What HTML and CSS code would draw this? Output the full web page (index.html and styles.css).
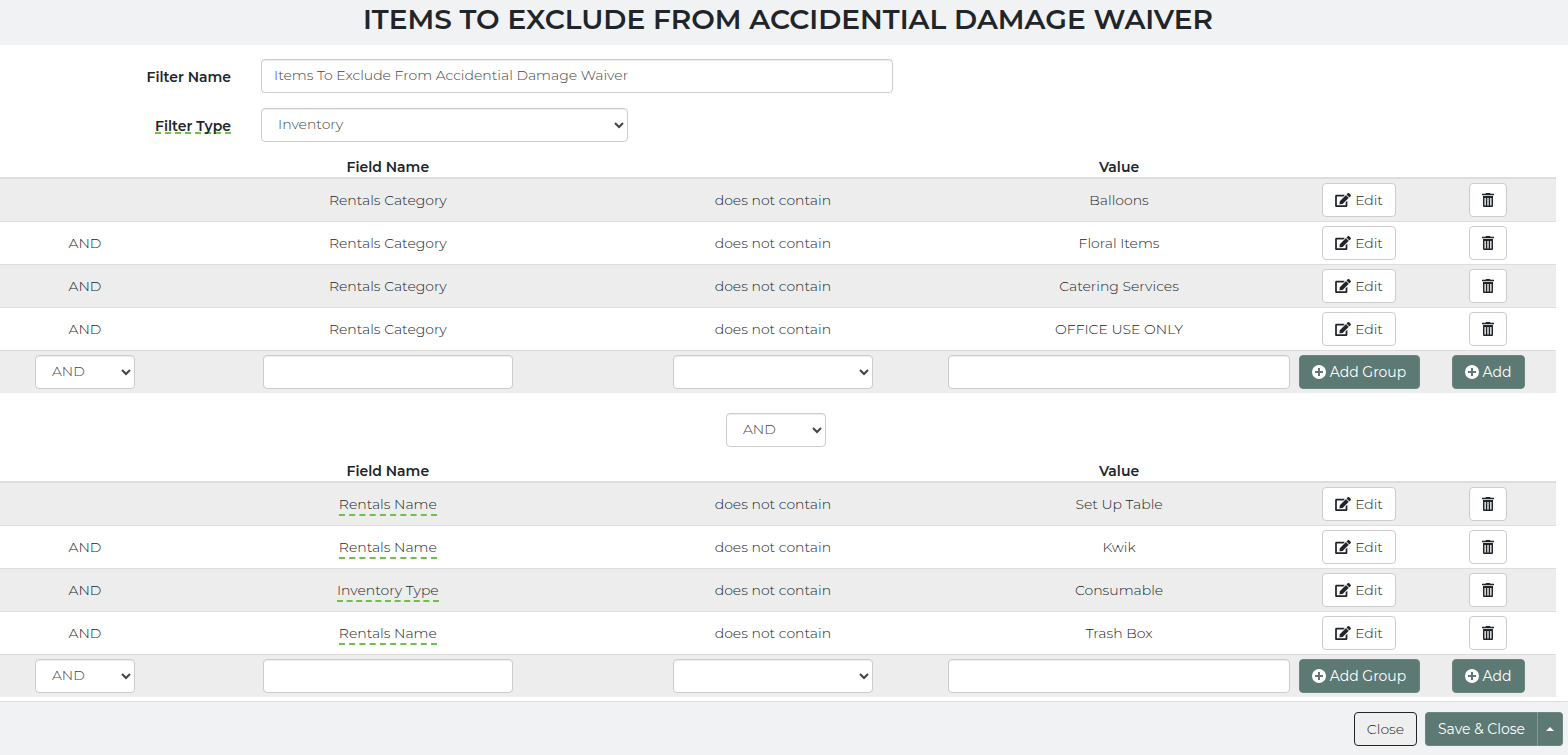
FILE: index.html
```html
<!DOCTYPE html>
<html lang="en">
<head>
<meta charset="utf-8">
<title>Items To Exclude From Accidential Damage Waiver</title>
<link rel="stylesheet" href="styles.css">
</head>
<body>
<svg class="sprite" aria-hidden="true">
  <symbol id="i-edit" viewBox="0 0 576 512"><path d="M402.6 83.2l90.2 90.2c3.8 3.8 3.8 10 0 13.8L274.4 405.6l-92.8 10.3c-12.4 1.4-22.9-9.1-21.5-21.5l10.3-92.8L388.8 83.2c3.8-3.8 10-3.8 13.8 0zm162-22.9l-48.8-48.8c-15.2-15.2-39.9-15.2-55.2 0l-35.4 35.4c-3.8 3.8-3.8 10 0 13.8l90.2 90.2c3.8 3.8 10 3.8 13.8 0l35.4-35.4c15.2-15.3 15.2-40 0-55.2zM384 346.2V448H64V128h229.8c3.2 0 6.2-1.3 8.5-3.5l40-40c7.6-7.6 2.2-20.5-8.5-20.5H48C21.5 64 0 85.5 0 112v352c0 26.5 21.5 48 48 48h352c26.5 0 48-21.5 48-48V306.2c0-10.7-12.9-16-20.5-8.5l-40 40c-2.2 2.3-3.5 5.3-3.5 8.5z"/></symbol>
  <symbol id="i-trash" viewBox="0 0 12 14"><path fill-rule="evenodd" d="M4 0h4l.5 .8H12v1.500H0V.8h3.500zM1 3h10v10a1 1 0 0 1-1 1H2a1 1 0 0 1-1-1zM2.500 5v7.500h1.300V5zM5.350 5v7.500h1.300V5zM8.200 5v7.500h1.300V5z"/></symbol>
  <symbol id="i-plus" viewBox="0 0 14 14"><path fill-rule="evenodd" d="M7 0a7 7 0 1 1 0 14A7 7 0 0 1 7 0zM6 3v3H3v2h3v3h2V8h3V6H8V3z"/></symbol>
</svg>

<header class="title-bar"><h1>ITEMS TO EXCLUDE FROM ACCIDENTIAL DAMAGE WAIVER</h1></header>

<main>
  <form class="filter-form">
    <div class="form-row">
      <label for="name">Filter Name</label>
      <input class="control" id="name" type="text" value="Items To Exclude From Accidential Damage Waiver">
    </div>
    <div class="form-row form-row-short">
      <label for="type"><span class="label-hint">Filter Type</span></label>
      <select class="control" id="type"><option>Inventory</option></select>
    </div>
  </form>

  <table class="rules">
    <colgroup><col class="c-join"><col class="c-field"><col><col class="c-value"><col class="c-edit"><col class="c-remove"></colgroup>
    <thead><tr><th></th><th>Field Name</th><th></th><th>Value</th><th></th><th></th></tr></thead>
    <tbody>
      <tr><td></td><td>Rentals Category</td><td>does not contain</td><td>Balloons</td><td><button class="btn"><svg class="i-edit"><use href="#i-edit"/></svg>Edit</button></td><td><button class="btn" aria-label="Delete"><svg class="i-trash"><use href="#i-trash"/></svg></button></td></tr>
      <tr><td>AND</td><td>Rentals Category</td><td>does not contain</td><td>Floral Items</td><td><button class="btn"><svg class="i-edit"><use href="#i-edit"/></svg>Edit</button></td><td><button class="btn" aria-label="Delete"><svg class="i-trash"><use href="#i-trash"/></svg></button></td></tr>
      <tr><td>AND</td><td>Rentals Category</td><td>does not contain</td><td>Catering Services</td><td><button class="btn"><svg class="i-edit"><use href="#i-edit"/></svg>Edit</button></td><td><button class="btn" aria-label="Delete"><svg class="i-trash"><use href="#i-trash"/></svg></button></td></tr>
      <tr><td>AND</td><td>Rentals Category</td><td>does not contain</td><td>OFFICE USE ONLY</td><td><button class="btn"><svg class="i-edit"><use href="#i-edit"/></svg>Edit</button></td><td><button class="btn" aria-label="Delete"><svg class="i-trash"><use href="#i-trash"/></svg></button></td></tr>
      <tr>
        <td><select class="control join" aria-label="Join"><option>AND</option><option>OR</option></select></td>
        <td><input class="control field" type="text" aria-label="Field name"></td>
        <td><select class="control operator" aria-label="Operator"><option></option></select></td>
        <td class="value-cell"><input class="control" type="text" aria-label="Value"></td>
        <td><button class="btn btn-primary btn-group-add"><svg class="i-plus"><use href="#i-plus"/></svg>Add Group</button></td>
        <td><button class="btn btn-primary btn-add"><svg class="i-plus"><use href="#i-plus"/></svg>Add</button></td>
      </tr>
    </tbody>
  </table>

  <div class="group-join"><select class="control join" aria-label="Join groups"><option>AND</option><option>OR</option></select></div>

  <table class="rules">
    <colgroup><col class="c-join"><col class="c-field"><col><col class="c-value"><col class="c-edit"><col class="c-remove"></colgroup>
    <thead><tr><th></th><th>Field Name</th><th></th><th>Value</th><th></th><th></th></tr></thead>
    <tbody>
      <tr><td></td><td><span class="hint">Rentals Name</span></td><td>does not contain</td><td>Set Up Table</td><td><button class="btn"><svg class="i-edit"><use href="#i-edit"/></svg>Edit</button></td><td><button class="btn" aria-label="Delete"><svg class="i-trash"><use href="#i-trash"/></svg></button></td></tr>
      <tr><td>AND</td><td><span class="hint">Rentals Name</span></td><td>does not contain</td><td>Kwik</td><td><button class="btn"><svg class="i-edit"><use href="#i-edit"/></svg>Edit</button></td><td><button class="btn" aria-label="Delete"><svg class="i-trash"><use href="#i-trash"/></svg></button></td></tr>
      <tr><td>AND</td><td><span class="hint">Inventory Type</span></td><td>does not contain</td><td>Consumable</td><td><button class="btn"><svg class="i-edit"><use href="#i-edit"/></svg>Edit</button></td><td><button class="btn" aria-label="Delete"><svg class="i-trash"><use href="#i-trash"/></svg></button></td></tr>
      <tr><td>AND</td><td><span class="hint">Rentals Name</span></td><td>does not contain</td><td>Trash Box</td><td><button class="btn"><svg class="i-edit"><use href="#i-edit"/></svg>Edit</button></td><td><button class="btn" aria-label="Delete"><svg class="i-trash"><use href="#i-trash"/></svg></button></td></tr>
      <tr>
        <td><select class="control join" aria-label="Join"><option>AND</option><option>OR</option></select></td>
        <td><input class="control field" type="text" aria-label="Field name"></td>
        <td><select class="control operator" aria-label="Operator"><option></option></select></td>
        <td class="value-cell"><input class="control" type="text" aria-label="Value"></td>
        <td><button class="btn btn-primary btn-group-add"><svg class="i-plus"><use href="#i-plus"/></svg>Add Group</button></td>
        <td><button class="btn btn-primary btn-add"><svg class="i-plus"><use href="#i-plus"/></svg>Add</button></td>
      </tr>
    </tbody>
  </table>
</main>

<footer class="actions">
  <button class="btn btn-close">Close</button>
  <div class="split">
    <button class="btn btn-primary btn-save">Save &amp; Close</button>
    <button class="btn btn-primary btn-caret" aria-label="More save options"><span class="caret"></span></button>
  </div>
</footer>
</body>
</html>
```

FILE: styles.css
```css
* { box-sizing: border-box; }

body {
  margin: 0;
  min-height: 100vh;
  display: flex;
  flex-direction: column;
  background: #fff;
  color: #212529;
  font: 300 14px/20px Montserrat, Inter, sans-serif;
}

.sprite { display: none; }

.title-bar {
  padding: 3px 0 10px 8px;
  background: #f1f2f4;
  text-align: center;
}

.title-bar h1 {
  margin: 0;
  font-size: 28px;
  font-weight: 600;
  line-height: 32px;
}

.filter-form { padding-top: 14px; }

.form-row {
  display: grid;
  grid-template-columns: 231px 632fr 645fr;
  column-gap: 30px;
  align-items: center;
  margin-bottom: 15px;
}

.form-row-short { grid-template-columns: 231px 367fr 910fr; }

.form-row label {
  padding-top: 2px;
  text-align: right;
  font-weight: 600;
}

.label-hint {
  text-decoration: underline dashed #6fbf4b 2px;
  text-decoration-skip-ink: none;
  text-underline-offset: 1px;
}

.control {
  width: 100%;
  height: 34px;
  padding: 5px 12px 7px;
  border: 1px solid #ccc;
  border-radius: 4px;
  background: #fff;
  box-shadow: inset 0 1px 1px rgba(0, 0, 0, .075);
  color: #444;
  font: inherit;
  vertical-align: middle;
}

.control.join { width: 100px; }
.control.field { width: 250px; }
.control.operator { width: 200px; }

.rules {
  width: calc(100% - 12px);
  table-layout: fixed;
  border-spacing: 0;
  text-align: center;
}

.c-join { width: 170px; }
.c-field { width: 28%; }
.c-value { width: 23%; }
.c-edit { width: 122px; }
.c-remove { width: 136px; }

.rules th {
  height: 22px;
  padding: 0;
  border-bottom: 2px solid #ddd;
  font-weight: 600;
}

.rules td {
  height: 43px;
  padding: 4px 0;
  border-top: 1px solid #ddd;
}

.rules tbody tr:first-child td { height: 42px; border-top: 0; }
.rules tbody tr:nth-child(odd) { background: #ededed; }
.rules .value-cell { padding: 4px 8px; }

.hint {
  padding-bottom: 1px;
  border-bottom: 2px dashed #6fbf4b;
}

.group-join {
  margin: 20px 12px 14px 0;
  padding-right: 4px;
  text-align: center;
}

.btn {
  display: inline-flex;
  align-items: center;
  justify-content: center;
  gap: 4px;
  height: 34px;
  padding: 6px 12px;
  border: 1px solid #ccc;
  border-radius: 4px;
  background: #fff;
  color: #212529;
  font: inherit;
  white-space: nowrap;
  vertical-align: middle;
}

.btn svg { fill: currentColor; flex: none; }
.i-edit { width: 16px; height: 14px; }
.i-trash { width: 12px; height: 14px; }
.i-plus { width: 14px; height: 14px; }

.btn-primary {
  border-color: #6b8681;
  background: #5c7973;
  color: #fff;
  font-weight: 400;
}

.btn-group-add { width: 121px; }
.btn-add { width: 73px; }

.actions {
  display: flex;
  justify-content: flex-end;
  gap: 8px;
  margin-top: auto;
  padding: 10px 5px 9px;
  border-top: 1px solid #ddd;
  background: #f1f2f4;
}

.btn-close { width: 63px; border-color: #212529; background: #efefef; }

.split { display: flex; }
.btn-save { width: 113px; border-right-color: #839995; border-radius: 4px 0 0 4px; }
.btn-caret { width: 25px; padding: 0; border-left: 0; border-radius: 0 4px 4px 0; }

.caret {
  border: 4px solid transparent;
  border-top: 0;
  border-bottom-color: #fff;
}
```
